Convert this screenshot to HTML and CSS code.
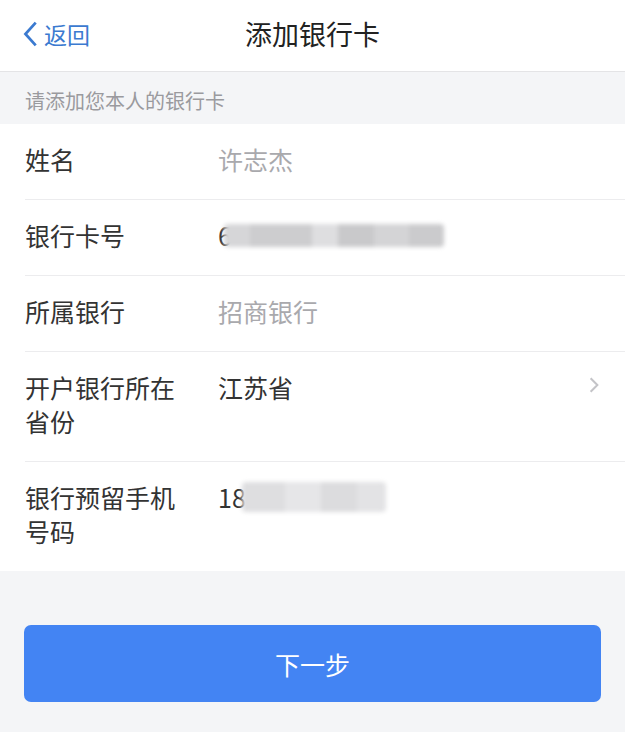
FILE: index.html
```html
<!DOCTYPE html>
<html lang="zh-CN">
<head>
    <meta charset="UTF-8">
    <meta name="viewport" content="width=device-width, initial-scale=1.0">
    <title>添加银行卡</title>
    <link rel="stylesheet" href="styles.css">
</head>
<body>

    <header class="nav-bar">
        <a class="back" href="#">
            <svg class="back-icon" viewBox="0 0 14 24"><polyline points="12,2 3,12 12,22"/></svg>
            返回
        </a>
        <h1 class="title">添加银行卡</h1>
    </header>

    <div class="hint">请添加您本人的银行卡</div>

    <ul class="form-list">
        <li class="form-row">
            <span class="label">姓名</span>
            <span class="value muted">许志杰</span>
        </li>
        <li class="form-row">
            <span class="label">银行卡号</span>
            <span class="value">6<span class="mask mask-card"></span></span>
        </li>
        <li class="form-row">
            <span class="label">所属银行</span>
            <span class="value muted">招商银行</span>
        </li>
        <li class="form-row">
            <span class="label">开户银行所在省份</span>
            <span class="value">江苏省</span>
            <svg class="chevron" viewBox="0 0 10 16"><polyline points="2,2 8,8 2,14"/></svg>
        </li>
        <li class="form-row">
            <span class="label">银行预留手机号码</span>
            <span class="value">18<span class="mask mask-phone"></span></span>
        </li>
    </ul>

    <div class="footer">
        <button class="next-btn">下一步</button>
    </div>

</body>
</html>
```

FILE: styles.css
```css
/* Base */
body {
    margin: 0;
    width: 625px;
    min-height: 732px;
    background-color: #f4f5f7;
    font-family: "Noto Sans CJK SC", "Noto Sans", sans-serif;
    color: #333;
}

/* Navigation bar */
.nav-bar {
    height: 71px;
    background-color: #fff;
    border-bottom: 1px solid #e4e4e6;
    display: flex;
    align-items: center;
    justify-content: center;
    position: relative;
}

.back {
    position: absolute;
    left: 22px;
    top: 0;
    height: 68px;
    display: flex;
    align-items: center;
    gap: 6px;
    color: #3b7ad0;
    font-size: 23px;
    text-decoration: none;
}

.back-icon {
    width: 16px;
    height: 28px;
    fill: none;
    stroke: #3b7ad0;
    stroke-width: 2.4;
}

.title {
    margin: 0 0 4px;
    font-size: 27px;
    font-weight: 400;
    color: #222;
}

/* Hint band */
.hint {
    height: 52px;
    line-height: 58px;
    padding-left: 25px;
    font-size: 20px;
    color: #9a9a9e;
}

/* Form rows */
.form-list {
    list-style: none;
    margin: 0;
    padding: 0;
    background-color: #fff;
}

.form-row {
    display: flex;
    align-items: flex-start;
    margin-left: 25px;
    padding: 18px 25px 23px 0;
    border-bottom: 1px solid #ececee;
    font-size: 25px;
    line-height: 34px;
}

.form-row:last-child {
    border-bottom: none;
}

.label {
    flex: 0 0 160px;
    margin-right: 33px;
    color: #333;
}

.value {
    flex: 1;
    display: flex;
    align-items: center;
    color: #333;
}

.value.muted {
    color: #a9a9ad;
}

/* Blurred private numbers */
.mask {
    display: inline-block;
    filter: blur(2px);
    border-radius: 4px;
}

.mask-card {
    width: 220px;
    height: 23px;
    margin-left: -8px;
    background: linear-gradient(90deg,
        #d6d6d8 0, #d6d6d8 12%,
        #cdcdcf 12%, #cdcdcf 40%,
        #dedee0 40%, #dedee0 52%,
        #c9c9cb 52%, #c9c9cb 68%,
        #d4d4d6 68%, #d4d4d6 84%,
        #cbcbcd 84%, #cbcbcd 100%);
}

.mask-phone {
    width: 144px;
    height: 30px;
    margin-left: -4px;
    background: linear-gradient(90deg,
        #dedee0 0, #dedee0 30%,
        #e6e6e8 30%, #e6e6e8 55%,
        #dcdcde 55%, #dcdcde 80%,
        #e3e3e5 80%, #e3e3e5 100%);
}

.chevron {
    width: 12px;
    height: 18px;
    margin-top: 6px;
    fill: none;
    stroke: #c4c4c8;
    stroke-width: 1.8;
}

/* Footer button */
.footer {
    padding: 54px 24px 29px;
}

.next-btn {
    display: block;
    width: 100%;
    height: 77px;
    border: none;
    border-radius: 7px;
    background-color: #4384f3;
    color: #fff;
    font-family: inherit;
    font-size: 25px;
    cursor: pointer;
}
```
